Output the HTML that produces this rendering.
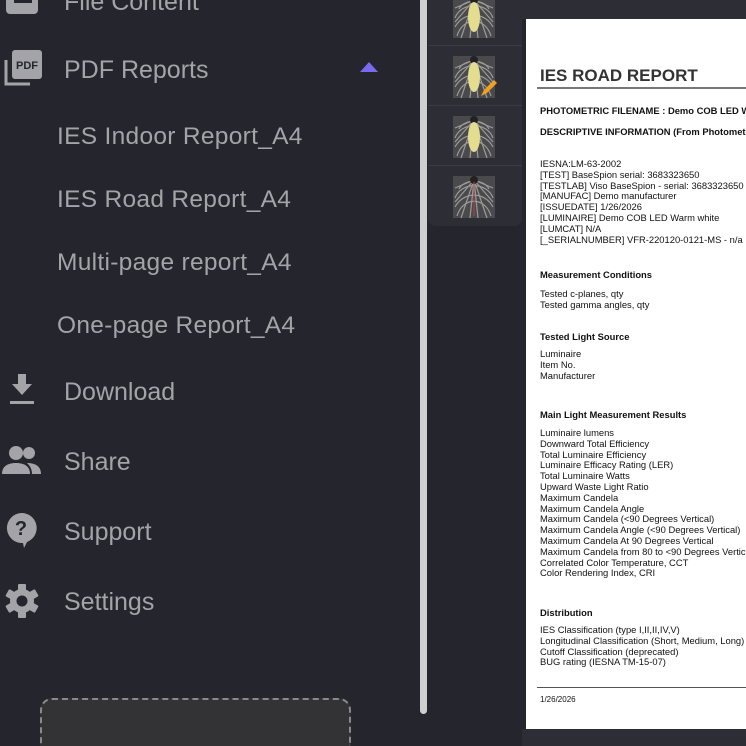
<!DOCTYPE html>
<html><head><style>
*{margin:0;padding:0;box-sizing:border-box}
html,body{width:746px;height:746px;overflow:hidden}
body{background:#25262d;position:relative;font-family:"Liberation Sans",sans-serif}
.it{position:absolute;color:#a3a3a8;font-size:25px;white-space:nowrap}
.sub{position:absolute;left:57px;color:#a3a3a8;font-size:24.5px;letter-spacing:0.3px;white-space:nowrap}
.ic{position:absolute}
.thumbs{position:absolute;left:428px;top:0;width:94px;height:226px;background:#2d2e35;border-radius:0 0 8px 8px}
.sep{position:absolute;left:0;width:94px;height:1px;background:#3b3c43}
.page{position:absolute;left:526px;top:19px;width:220px;height:710px;background:#fff;color:#111;font-size:9.4px;line-height:10.8px;overflow:hidden}
.page p{position:absolute;left:14px;white-space:nowrap}
.b{font-weight:bold}
</style></head><body>
<div class="ic" style="left:6px;top:-12px;width:32px;height:26px;background:#a3a3a8;border-radius:4px"></div>
<div class="ic" style="left:14px;top:0;width:18px;height:3px;background:#25262d"></div>
<div class="it" style="left:64px;top:-12px">File Content</div>

<svg class="ic" style="left:4px;top:50px" width="38" height="38" viewBox="0 0 38 38"><path d="M2 10v24h24" fill="none" stroke="#a3a3a8" stroke-width="3"/><rect x="8" y="0" width="30" height="29" rx="3" fill="#a3a3a8"/><text x="23" y="19" font-size="11" font-weight="bold" fill="#25262d" text-anchor="middle" font-family="Liberation Sans">PDF</text></svg>
<div class="it" style="left:64px;top:56px">PDF Reports</div>
<div class="ic" style="left:360px;top:62px;width:0;height:0;border-left:9px solid transparent;border-right:9px solid transparent;border-bottom:10px solid #7a6af0"></div>

<div class="sub" style="top:123px">IES Indoor Report_A4</div>
<div class="sub" style="top:186px">IES Road Report_A4</div>
<div class="sub" style="top:249px">Multi-page report_A4</div>
<div class="sub" style="top:312px">One-page Report_A4</div>

<svg class="ic" style="left:8px;top:374px" width="28" height="32" viewBox="0 0 28 32"><path d="M10 0h8v10h6l-10 11L4 10h6z" fill="#a3a3a8"/><rect x="2" y="27" width="24" height="3" fill="#a3a3a8"/></svg>
<div class="it" style="left:64px;top:378px">Download</div>

<svg class="ic" style="left:2px;top:444px" width="40" height="32" viewBox="0 0 40 32"><circle cx="14" cy="9" r="7" fill="#a3a3a8"/><circle cx="27" cy="9" r="6" fill="#a3a3a8"/><path d="M0 30c0-8 6-11 14-11s14 3 14 11z" fill="#a3a3a8"/><path d="M25 19c8 0 14 3 14 11h-9c0-5-2-8-5-11z" fill="#a3a3a8"/></svg>
<div class="it" style="left:64px;top:448px">Share</div>

<svg class="ic" style="left:5px;top:512px" width="32" height="36" viewBox="0 0 32 36"><path d="M16 1a15 15 0 1 0 2 30l1 5 3-6A15 15 0 0 0 16 1z" fill="#a3a3a8"/><text x="16" y="23" font-size="20" font-weight="bold" fill="#25262d" text-anchor="middle" font-family="Liberation Sans">?</text></svg>
<div class="it" style="left:64px;top:518px">Support</div>

<svg class="ic" style="left:5px;top:584px" width="34" height="34" viewBox="0 0 34 34"><g fill="#a3a3a8"><circle cx="17" cy="17" r="12"/><rect x="13" y="0" width="8" height="34" rx="1"/><rect x="13" y="0" width="8" height="34" rx="1" transform="rotate(60 17 17)"/><rect x="13" y="0" width="8" height="34" rx="1" transform="rotate(120 17 17)"/></g><circle cx="17" cy="17" r="5.5" fill="#25262d"/></svg>
<div class="it" style="left:64px;top:588px">Settings</div>

<div class="ic" style="left:40px;top:698px;width:311px;height:48px;border:2px dashed #8a8a8e;border-bottom:none;border-radius:12px 12px 0 0;background:#333336"></div>

<div class="ic" style="left:420px;top:0;width:7px;height:714px;background:#cfcfcf;border-radius:0 0 4px 4px"></div>

<div class="thumbs">
<div class="sep" style="top:45px"></div><div class="sep" style="top:105px"></div><div class="sep" style="top:165px"></div>
<svg style="position:absolute;left:0;top:0" width="94" height="226">
<defs><g id="g"><rect width="42" height="42" fill="#4a4a4c"/><g stroke="#9a9a9a" stroke-width="1.2" fill="none"><path d="M21 4L2 12M21 4L40 12M21 4L2 26M21 4L40 26M21 4L8 42M21 4L34 42M21 4L17 42M21 4L25 42"/><path d="M4 40a18 22 0 0 1 34 0M2 31a22 24 0 0 1 38 0M2 22a20 18 0 0 1 38 0M6 13a16 12 0 0 1 30 0"/></g></g></defs>
<g transform="translate(25,-4)"><use href="#g"/><circle cx="21" cy="4" r="4" fill="#222"/><ellipse cx="21" cy="21" rx="6" ry="15" fill="#e4dd90"/></g>
<g transform="translate(25,56)"><use href="#g"/><circle cx="21" cy="4" r="4" fill="#222"/><ellipse cx="21" cy="21" rx="6" ry="15" fill="#e4dd90"/><path d="M28 40l3-6 10-10 3 3-10 10z" fill="#f0a020"/></g>
<g transform="translate(25,116)"><use href="#g"/><circle cx="21" cy="4" r="4" fill="#222"/><ellipse cx="21" cy="21" rx="6" ry="15" fill="#e4dd90"/></g>
<g transform="translate(25,176)"><use href="#g"/><circle cx="21" cy="4" r="4" fill="#222"/><path d="M21 6v34" stroke="#c04040" stroke-width="1"/></g>
</svg>
</div>

<div class="ic" style="left:522px;top:0;width:224px;height:19px;background:#2d2e35"></div>
<div class="ic" style="left:522px;top:729px;width:224px;height:17px;background:#2d2e35"></div>

<div class="page">
<p class="b" style="top:47px;font-size:17px;line-height:20px;color:#333">IES ROAD REPORT</p>
<div style="position:absolute;left:11px;top:68px;width:220px;height:2px;background:#777"></div>
<p class="b" style="top:87px">PHOTOMETRIC FILENAME : Demo COB LED Warm white</p>
<p class="b" style="top:108px">DESCRIPTIVE INFORMATION (From Photometric File)</p>
<p style="top:140px">IESNA:LM-63-2002<br>[TEST] BaseSpion serial: 3683323650<br>[TESTLAB] Viso BaseSpion - serial: 3683323650<br>[MANUFAC] Demo manufacturer<br>[ISSUEDATE] 1/26/2026<br>[LUMINAIRE] Demo COB LED Warm white<br>[LUMCAT] N/A<br>[_SERIALNUMBER] VFR-220120-0121-MS - n/a</p>
<p class="b" style="top:251px">Measurement Conditions</p>
<p style="top:270px">Tested c-planes, qty<br>Tested gamma angles, qty</p>
<p class="b" style="top:313px">Tested Light Source</p>
<p style="top:330px">Luminaire<br>Item No.<br>Manufacturer</p>
<p class="b" style="top:391px">Main Light Measurement Results</p>
<p style="top:409px">Luminaire lumens<br>Downward Total Efficiency<br>Total Luminaire Efficiency<br>Luminaire Efficacy Rating (LER)<br>Total Luminaire Watts<br>Upward Waste Light Ratio<br>Maximum Candela<br>Maximum Candela Angle<br>Maximum Candela (&lt;90 Degrees Vertical)<br>Maximum Candela Angle (&lt;90 Degrees Vertical)<br>Maximum Candela At 90 Degrees Vertical<br>Maximum Candela from 80 to &lt;90 Degrees Vertical<br>Correlated Color Temperature, CCT<br>Color Rendering Index, CRI</p>
<p class="b" style="top:589px">Distribution</p>
<p style="top:606px">IES Classification (type I,II,II,IV,V)<br>Longitudinal Classification (Short, Medium, Long)<br>Cutoff Classification (deprecated)<br>BUG rating (IESNA TM-15-07)</p>
<div style="position:absolute;left:11px;top:668px;width:220px;height:1px;background:#555"></div>
<p style="top:676px;font-size:8px">1/26/2026</p>
</div>
</body></html>
